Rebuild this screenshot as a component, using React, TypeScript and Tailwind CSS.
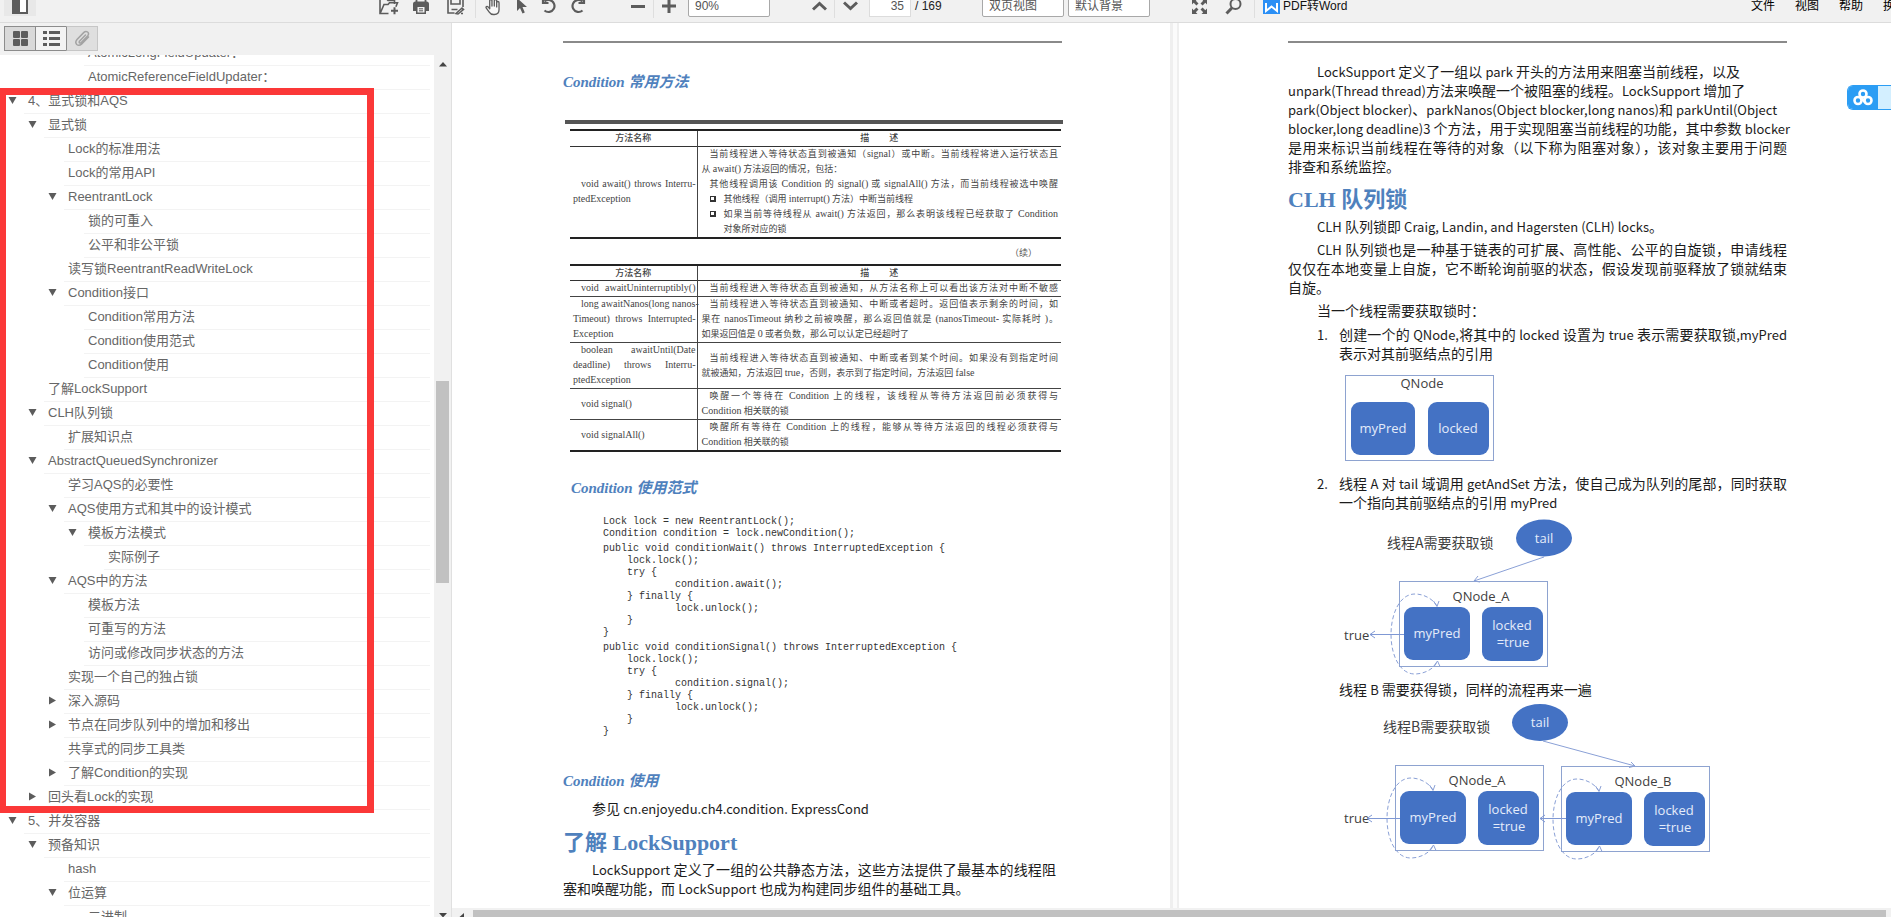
import React from "react";

type Level = 1 | 2 | 3 | 4 | 5;
type OutlineItem = { text: string; level: Level; state?: "open" | "closed" };

const outline: OutlineItem[] = [
  { text: "AtomicLongFieldUpdater：", level: 4 },
  { text: "AtomicReferenceFieldUpdater：", level: 4 },
  { text: "4、显式锁和AQS", level: 1, state: "open" },
  { text: "显式锁", level: 2, state: "open" },
  { text: "Lock的标准用法", level: 3 },
  { text: "Lock的常用API", level: 3 },
  { text: "ReentrantLock", level: 3, state: "open" },
  { text: "锁的可重入", level: 4 },
  { text: "公平和非公平锁", level: 4 },
  { text: "读写锁ReentrantReadWriteLock", level: 3 },
  { text: "Condition接口", level: 3, state: "open" },
  { text: "Condition常用方法", level: 4 },
  { text: "Condition使用范式", level: 4 },
  { text: "Condition使用", level: 4 },
  { text: "了解LockSupport", level: 2 },
  { text: "CLH队列锁", level: 2, state: "open" },
  { text: "扩展知识点", level: 3 },
  { text: "AbstractQueuedSynchronizer", level: 2, state: "open" },
  { text: "学习AQS的必要性", level: 3 },
  { text: "AQS使用方式和其中的设计模式", level: 3, state: "open" },
  { text: "模板方法模式", level: 4, state: "open" },
  { text: "实际例子", level: 5 },
  { text: "AQS中的方法", level: 3, state: "open" },
  { text: "模板方法", level: 4 },
  { text: "可重写的方法", level: 4 },
  { text: "访问或修改同步状态的方法", level: 4 },
  { text: "实现一个自己的独占锁", level: 3 },
  { text: "深入源码", level: 3, state: "closed" },
  { text: "节点在同步队列中的增加和移出", level: 3, state: "closed" },
  { text: "共享式的同步工具类", level: 3 },
  { text: "了解Condition的实现", level: 3, state: "closed" },
  { text: "回头看Lock的实现", level: 2, state: "closed" },
  { text: "5、并发容器", level: 1, state: "open" },
  { text: "预备知识", level: 2, state: "open" },
  { text: "hash", level: 3 },
  { text: "位运算", level: 3, state: "open" },
  { text: "二进制", level: 4 },
];

const indent: Record<Level, string> = {
  1: "ml-2",
  2: "ml-7",
  3: "ml-12",
  4: "ml-[68px]",
  5: "ml-[88px]",
};

const uiFont = "font-['Liberation_Sans','Noto_Sans_CJK_SC',sans-serif]";

function Arrow({ state }: { state?: "open" | "closed" }) {
  return (
    <span className="flex h-5 w-4 shrink-0 items-center">
      {state && (
        <svg width="9" height="9" viewBox="0 0 9 9" fill="#5c5c5c">
          {state === "open" ? <path d="M0.5 1h8L4.5 8z" /> : <path d="M1 0.5v8L8 4.5z" />}
        </svg>
      )}
    </span>
  );
}

function OutlineTree() {
  return (
    <ul className="-mt-[13px] mr-1">
      {outline.map((item) => (
        <li key={item.text} className={`${indent[item.level]} flex h-6`}>
          <Arrow state={item.state} />
          <a
            href="#"
            className="flex-1 border-b border-[#f3f3f3] pl-1 text-[13px] leading-[21px] whitespace-nowrap text-[#666]"
          >
            {item.text}
          </a>
        </li>
      ))}
    </ul>
  );
}

function ToolButton({ label, className = "", children }: { label: string; className?: string; children: React.ReactNode }) {
  return (
    <button type="button" aria-label={label} className={`flex h-5 shrink-0 items-center justify-center ${className}`}>
      {children}
    </button>
  );
}

function Separator({ className }: { className: string }) {
  return <span className={`h-6 w-px shrink-0 bg-[#dedede] ${className}`} />;
}

function Toolbar() {
  return (
    <header className="flex h-[23px] shrink-0 items-end overflow-hidden border-b border-[#dcdcdc] bg-[#f1f1f1] text-xs leading-3 text-[#555]">
      <div className="flex h-8 w-full shrink-0 items-center">
        <ToolButton label="侧边栏" className="ml-1 w-8 bg-[#e8e8e8]">
          <svg width="16" height="18" viewBox="0 0 16 18">
            <rect x="1" y="1" width="14" height="15" fill="#fff" stroke="#5c5c5c" strokeWidth="2" />
            <rect x="0" y="0" width="8" height="17" fill="#5c5c5c" />
          </svg>
        </ToolButton>
        <ToolButton label="打开" className="ml-[343px] w-5">
          <svg width="20" height="20" viewBox="0 0 20 20" fill="none" stroke="#5c5c5c" strokeWidth="1.6">
            <path d="M9.500 17.500H1V2h6l2 2.500h6.500V8M1.300 17L5 8.500h4l1.500-1.800h8l-1.600 4" />
            <path d="M12 14.800h7M15.500 11.300v7" strokeWidth="2" />
          </svg>
        </ToolButton>
        <ToolButton label="打印" className="ml-3.5 w-4">
          <svg width="16" height="20" viewBox="0 0 16 20">
            <path d="M3.500 7V0.500h9V7" fill="none" stroke="#5c5c5c" strokeWidth="1.800" />
            <path d="M0 8q0-2.500 2.500-2.500h11Q16 5.500 16 8v7h-3v3H3v-3H0z" fill="#5c5c5c" />
            <path d="M4.500 11h7v5.500h-7z" fill="#f1f1f1" />
            <path d="M6 12.800h4M6 14.800h4" stroke="#5c5c5c" />
          </svg>
        </ToolButton>
        <ToolButton label="保存" className="ml-[18px] w-[18px]">
          <svg width="18" height="20" viewBox="0 0 18 20" fill="none" stroke="#5c5c5c" strokeWidth="1.600">
            <path d="M7.500 17H1V1h12.500L16 3.500V11M4 1v7h9V1M4.500 13.500h6" />
            <path d="M9 17.500l6-5.500 1.500 1.500-5.500 4.500zM14 17.500h2" />
          </svg>
        </ToolButton>
        <Separator className="ml-2.5" />
        <ToolButton label="手型工具" className="ml-[9px] w-4">
          <svg width="17" height="20" viewBox="0 0 17 20" fill="#f8f8f8" stroke="#5c5c5c" strokeWidth="1.400" strokeLinejoin="round">
            <path d="M5 12V4.500a1.200 1.200 0 0 1 2.400 0V10 3.500a1.200 1.200 0 0 1 2.500 0V10 4.500a1.200 1.200 0 0 1 2.500 0V11 6.500a1.200 1.200 0 0 1 2.500 0V14q0 5-5 5H9q-3 0-4.500-2.500L1.200 12q-.5-1.500 1-1.500 1.200.2 2.800 2.500z" />
          </svg>
        </ToolButton>
        <ToolButton label="选择" className="ml-4 w-2.5">
          <svg width="10" height="20" viewBox="0 0 10 20" fill="#5c5c5c">
            <path d="M0 2v13l3-3 2.500 5.500 2.300-1L5.500 11H10z" />
          </svg>
        </ToolButton>
        <ToolButton label="向左旋转" className="ml-3.5 w-4">
          <svg width="16" height="20" viewBox="0 0 16 20" fill="none" stroke="#5c5c5c" strokeWidth="2.200">
            <path d="M3.500 5.500Q6 3.500 9 4.200a6 6 0 1 1-5.500 10.300" />
            <path d="M2 1.500v5.500h5.500" />
          </svg>
        </ToolButton>
        <ToolButton label="向右旋转" className="ml-[13px] w-4">
          <svg width="16" height="20" viewBox="0 0 16 20" fill="none" stroke="#5c5c5c" strokeWidth="2.200">
            <path d="M12.500 5.500Q10 3.500 7 4.200a6 6 0 1 0 5.500 10.300" />
            <path d="M14 1.500v5.500H8.500" />
          </svg>
        </ToolButton>
        <ToolButton label="缩小" className="ml-[45px] w-3.5">
          <span className="h-[3px] w-3.5 bg-[#5c5c5c]" />
        </ToolButton>
        <Separator className="ml-2" />
        <ToolButton label="放大" className="ml-2 w-3.5">
          <svg width="14" height="14" viewBox="0 0 14 14" stroke="#5c5c5c" strokeWidth="3">
            <path d="M0 7h14M7 0v14" />
          </svg>
        </ToolButton>
        <input
          aria-label="缩放比例"
          defaultValue="90%"
          className="ml-3 h-[22px] w-[82px] shrink-0 rounded-xs border border-[#a8a8a8] bg-white px-1.5"
        />
        <ToolButton label="上一页" className="ml-[42px] w-[15px]">
          <svg width="15" height="10" viewBox="0 0 15 10" fill="none" stroke="#5c5c5c" strokeWidth="3">
            <path d="M1 8.500l6.500-6 6.500 6" />
          </svg>
        </ToolButton>
        <Separator className="ml-[7px]" />
        <ToolButton label="下一页" className="ml-2 w-[15px]">
          <svg width="15" height="10" viewBox="0 0 15 10" fill="none" stroke="#5c5c5c" strokeWidth="3">
            <path d="M1 1.500l6.500 6 6.500-6" />
          </svg>
        </ToolButton>
        <input
          aria-label="页码"
          defaultValue="35"
          className="ml-[11px] h-[22px] w-[42px] shrink-0 border border-[#dcdcdc] bg-white px-1.5 text-right"
        />
        <span className="ml-1 w-[26px] shrink-0 whitespace-nowrap text-[#222]">/ 169</span>
        <select
          aria-label="视图模式"
          className="ml-[41px] h-[22px] w-[82px] shrink-0 appearance-none rounded-xs border border-[#a8a8a8] bg-white px-1.5"
        >
          <option>双页视图</option>
        </select>
        <select
          aria-label="背景"
          className="ml-1 h-[22px] w-[82px] shrink-0 appearance-none rounded-xs border border-[#a8a8a8] bg-white px-1.5"
        >
          <option>默认背景</option>
        </select>
        <ToolButton label="全屏" className="ml-[42px] w-[15px]">
          <svg width="15" height="15" viewBox="0 0 15 15" fill="#5c5c5c">
            <path d="M0 0h5.500L3.800 1.700 6.500 4.400 4.400 6.500 1.700 3.800 0 5.500zM15 0v5.500l-1.700-1.700-2.700 2.700-2.100-2.100 2.700-2.700L9.500 0zM0 15V9.500l1.700 1.700 2.700-2.700 2.100 2.100-2.700 2.700L5.500 15zM15 15H9.500l1.700-1.700-2.700-2.700 2.100-2.100 2.700 2.700L15 9.500z" />
          </svg>
        </ToolButton>
        <ToolButton label="查找" className="ml-[18px] w-[17px]">
          <svg width="17" height="18" viewBox="0 0 17 18" fill="none" stroke="#5c5c5c">
            <circle cx="10.500" cy="7" r="5" strokeWidth="2" />
            <path d="M6.800 11L1.500 16.500" strokeWidth="3" />
          </svg>
        </ToolButton>
        <Separator className="ml-3" />
        <button type="button" className="ml-2 flex shrink-0 items-center gap-[3px] whitespace-nowrap text-[#111]">
          <svg width="17" height="15" viewBox="0 1 17 15">
            <rect width="17" height="17" fill="#2b8ff5" />
            <path d="M3 5v8l5.500-4.500L14 13V5" fill="none" stroke="#fff" strokeWidth="2" />
          </svg>
          PDF转Word
        </button>
        <nav className="ml-auto flex w-[140px] shrink-0 gap-5 overflow-hidden text-black">
          {["文件", "视图", "帮助", "换"].map((name) => (
            <button key={name} type="button" className="shrink-0">
              {name}
            </button>
          ))}
        </nav>
      </div>
    </header>
  );
}

function Sidebar() {
  return (
    <aside className="relative flex w-[452px] shrink-0 flex-col border-r border-[#e0e0e0] bg-[#f1f1f1]">
      <div className="flex h-8 shrink-0 px-1 pt-[3px]">
        <button type="button" aria-label="缩略图" className="flex h-[25px] w-8 items-center justify-center border border-[#8c8c8c] bg-[#d9d9d9]">
          <svg width="15" height="15" viewBox="0 0 15 15" fill="#5c5c5c">
            <rect width="7" height="7" rx="1" />
            <rect x="8" width="7" height="7" rx="1" />
            <rect y="8" width="7" height="7" rx="1" />
            <rect x="8" y="8" width="7" height="7" rx="1" />
          </svg>
        </button>
        <button type="button" aria-label="目录" className="-ml-px flex h-[25px] w-8 items-center justify-center border border-[#8c8c8c] bg-[#f3f3f3]">
          <svg width="17" height="15" viewBox="0 0 17 15" fill="#5c5c5c">
            <path d="M0 0h4v3H0zM6 0h11v3H6zM0 6h4v3H0zM6 6h11v3H6zM0 12h4v3H0zM6 12h11v3H6z" />
          </svg>
        </button>
        <button type="button" aria-label="附件" className="-ml-px flex h-[25px] w-8 items-center justify-center border border-l-[#8c8c8c] border-[#c6c6c6] bg-[#dfdfdf]">
          <svg width="17" height="17" viewBox="0 0 17 17" fill="none" stroke="#a3a3a3" strokeWidth="1.500" strokeLinecap="round">
            <path d="M11.500 5L5.500 11.200q-.8 1.300.3 1.800.8.300 1.500-.5l6.500-6.800q1.500-2.200-.2-3.700-1.900-1.300-3.700.4L3 9.500q-2.300 2.800-.3 5 2.400 1.800 4.800-.4L14.500 7" />
          </svg>
        </button>
      </div>
      <div className="flex min-h-0 flex-1">
        <div className="min-w-0 flex-1 overflow-hidden bg-white">
          <OutlineTree />
        </div>
        <div className="flex w-[17px] shrink-0 flex-col items-center overflow-hidden">
          <svg className="mt-[7px] shrink-0" width="8" height="5" viewBox="0 0 8 5" fill="#444">
            <path d="M0 4.500L4 0l4 4.500z" />
          </svg>
          <span className="grow-[314]" />
          <span className="w-[13px] grow-[203] bg-[#c1c1c1]" />
          <span className="grow-[330]" />
          <svg className="shrink-0" width="8" height="4" viewBox="0 0 8 4" fill="#444">
            <path d="M0 0h8L4 4.500z" />
          </svg>
        </div>
      </div>
      <div className="pointer-events-none absolute top-[65px] -left-px h-[725px] w-[375px] border-7 border-[#fb3838]" />
    </aside>
  );
}

/* Sets Latin runs in their own size so that they sit evenly beside the CJK glyphs. */
function Mixed({ text, latin }: { text: string; latin: string }) {
  const parts = text.split(/([\x21-\x7e]+(?: +[\x21-\x7e]+)*)/);
  return (
    <>
      {parts.map((part, i) =>
        i % 2 ? (
          <span key={i} className={latin}>
            {part}
          </span>
        ) : (
          part
        ),
      )}
    </>
  );
}

type LineData = { text: string; full?: boolean; first?: boolean };

function BodyText({ lines, className = "" }: { lines: LineData[]; className?: string }) {
  return (
    <p className={`font-['Noto_Sans_CJK_SC',sans-serif] text-sm leading-[19px] text-[#1c1c1c] ${className}`}>
      {lines.map((line) => (
        <span
          key={line.text}
          className={`block whitespace-nowrap ${line.full ? "[text-align-last:justify]" : ""} ${line.first ? "pl-[29px]" : ""}`}
        >
          <Mixed text={line.text} latin="text-[13px] leading-none" />
        </span>
      ))}
    </p>
  );
}

function H2({ children, className }: { children: React.ReactNode; className: string }) {
  return (
    <h2 className={`font-['Liberation_Serif','Noto_Sans_CJK_SC',serif] text-[22px] leading-7 font-bold text-[#4f81bd] ${className}`}>
      {children}
    </h2>
  );
}

function H3({ children, className }: { children: React.ReactNode; className: string }) {
  return (
    <h3 className={`font-['Liberation_Serif','Noto_Sans_CJK_SC',serif] text-[15px] leading-5 font-bold text-[#4f81bd] italic ${className}`}>
      {children}
    </h3>
  );
}

type CellLine = { text: string; pad?: boolean; full?: boolean; bullet?: boolean; hang?: boolean };
type MethodRow = { name: CellLine[]; desc: CellLine[]; height: string };

function CellLines({ lines }: { lines: CellLine[] }) {
  return (
    <>
      {lines.map((line) => (
        <div
          key={line.text}
          className={`flex whitespace-nowrap ${line.pad ? "pl-2" : ""} ${line.hang ? "pl-[22px]" : ""}`}
        >
          {line.bullet && <span className="mt-1 mr-2 size-1.5 shrink-0 border border-r-2 border-b-2 border-[#333]" />}
          <span className={`flex-1 ${line.full ? "[text-align-last:justify]" : ""}`}>
            <Mixed text={line.text} latin="text-[10px] leading-none" />
          </span>
        </div>
      ))}
    </>
  );
}

function MethodTable({ rows, className }: { rows: MethodRow[]; className: string }) {
  return (
    <table
      className={`w-full table-fixed border-collapse border-y-2 border-[#222] font-['Liberation_Serif','Noto_Sans_CJK_SC',serif] text-[9px] leading-[15px] text-[#444] ${className}`}
    >
      <thead>
        <tr className="h-4 border-b border-[#333] leading-[14px]">
          <th className="w-[127px] border-r border-[#444] p-0 font-medium">方法名称</th>
          <th className="p-0 font-medium">
            <span className="flex justify-center gap-5">
              <span>描</span>
              <span>述</span>
            </span>
          </th>
        </tr>
      </thead>
      <tbody>
        {rows.map((row) => (
          <tr key={row.name[0].text} className={`${row.height} border-b border-[#444]`}>
            <td className="border-r border-[#444] py-0 pr-px pl-[3px]">
              <CellLines lines={row.name} />
            </td>
            <td className="py-0 pr-[3px] pl-1">
              <CellLines lines={row.desc} />
            </td>
          </tr>
        ))}
      </tbody>
    </table>
  );
}

const firstTable: MethodRow[] = [
  {
    height: "h-[90px]",
    name: [
      { text: "void await() throws Interru-", pad: true, full: true },
      { text: "ptedException" },
    ],
    desc: [
      { text: "当前线程进入等待状态直到被通知（signal）或中断。当前线程将进入运行状态且", pad: true, full: true },
      { text: "从 await() 方法返回的情况，包括：" },
      { text: "其他线程调用该 Condition 的 signal() 或 signalAll() 方法，而当前线程被选中唤醒", pad: true, full: true },
      { text: "其他线程（调用 interrupt() 方法）中断当前线程", pad: true, bullet: true },
      { text: "如果当前等待线程从 await() 方法返回，那么表明该线程已经获取了 Condition", pad: true, bullet: true, full: true },
      { text: "对象所对应的锁", hang: true },
    ],
  },
];

const secondTable: MethodRow[] = [
  {
    height: "h-4",
    name: [{ text: "void awaitUninterruptibly()", pad: true, full: true }],
    desc: [{ text: "当前线程进入等待状态直到被通知，从方法名称上可以看出该方法对中断不敏感", pad: true, full: true }],
  },
  {
    height: "h-[45px]",
    name: [
      { text: "long awaitNanos(long nanos-", pad: true, full: true },
      { text: "Timeout) throws Interrupted-", full: true },
      { text: "Exception" },
    ],
    desc: [
      { text: "当前线程进入等待状态直到被通知、中断或者超时。返回值表示剩余的时间，如", pad: true, full: true },
      { text: "果在 nanosTimeout 纳秒之前被唤醒，那么返回值就是 (nanosTimeout- 实际耗时 )。", full: true },
      { text: "如果返回值是 0 或者负数，那么可以认定已经超时了" },
    ],
  },
  {
    height: "h-[45px]",
    name: [
      { text: "boolean awaitUntil(Date", pad: true, full: true },
      { text: "deadline) throws Interru-", full: true },
      { text: "ptedException" },
    ],
    desc: [
      { text: "当前线程进入等待状态直到被通知、中断或者到某个时间。如果没有到指定时间", pad: true, full: true },
      { text: "就被通知，方法返回 true，否则，表示到了指定时间，方法返回 false" },
    ],
  },
  {
    height: "h-[31px]",
    name: [{ text: "void signal()", pad: true }],
    desc: [
      { text: "唤醒一个等待在 Condition 上的线程，该线程从等待方法返回前必须获得与", pad: true, full: true },
      { text: "Condition 相关联的锁" },
    ],
  },
  {
    height: "h-[31px]",
    name: [{ text: "void signalAll()", pad: true }],
    desc: [
      { text: "唤醒所有等待在 Condition 上的线程，能够从等待方法返回的线程必须获得与", pad: true, full: true },
      { text: "Condition 相关联的锁" },
    ],
  },
];

const codeBlocks = [
  `Lock lock = new ReentrantLock();
Condition condition = lock.newCondition();`,
  `public void conditionWait() throws InterruptedException {
    lock.lock();
    try {
            condition.await();
    } finally {
            lock.unlock();
    }
}`,
  `public void conditionSignal() throws InterruptedException {
    lock.lock();
    try {
            condition.signal();
    } finally {
            lock.unlock();
    }
}`,
];

function LeftPage() {
  return (
    <article className="overflow-hidden bg-white pt-[18px] pr-[108px] pl-[111px]">
      <hr className="border-t-2 border-[#8a8a8a]" />
      <H3 className="mt-[29px]">Condition 常用方法</H3>
      <div className="mt-7 -mr-px ml-0.5 h-1 bg-[#555]" />
      <div className="mr-px ml-[7px]">
        <MethodTable rows={firstTable} className="mt-[5px]" />
        <p className="mt-1.5 pr-6 text-right font-['Noto_Sans_CJK_SC',sans-serif] text-[9px] leading-[15px] text-[#555]">（续）</p>
        <MethodTable rows={secondTable} className="mt-1" />
      </div>
      <H3 className="mt-[26px] ml-2">Condition 使用范式</H3>
      <div className="mt-[18px] ml-10 flex flex-col gap-[3px] font-['Liberation_Mono',monospace] text-[10px] leading-3 text-[#333]">
        {codeBlocks.map((code) => (
          <pre key={code} className="font-[inherit]">
            {code}
          </pre>
        ))}
      </div>
      <H3 className="mt-[33px]">Condition 使用</H3>
      <BodyText className="mt-2" lines={[{ text: "参见 cn.enjoyedu.ch4.condition. ExpressCond", first: true }]} />
      <H2 className="mt-[11px]">了解 LockSupport</H2>
      <BodyText
        className="mt-[3px] mr-[6px]"
        lines={[
          { text: "LockSupport 定义了一组的公共静态方法，这些方法提供了最基本的线程阻", first: true, full: true },
          { text: "塞和唤醒功能，而 LockSupport 也成为构建同步组件的基础工具。" },
        ]}
      />
    </article>
  );
}

const nodeText = "font-['Open_Sans','Noto_Sans_CJK_SC',sans-serif] text-[13px]";
const titleText = "font-['Noto_Sans_CJK_SC',sans-serif] text-sm";

function QueueNode({ x, y, label }: { x: number; y: number; label: string }) {
  return (
    <g transform={`translate(${x} ${y})`}>
      <rect x="0.5" y="0.5" width="148" height="85" fill="#fff" stroke="#8ea3d0" />
      <text x="82" y="20" textAnchor="middle" fill="#404040">
        {label}
      </text>
      <rect x="5" y="26" width="66" height="53" rx="9" fill="#4472c4" />
      <rect x="83" y="26" width="61" height="54" rx="9" fill="#4472c4" />
      <text x="38" y="57" textAnchor="middle" fill="#e4ecfa">
        myPred
      </text>
      <text x="113" y="49" textAnchor="middle" fill="#e4ecfa">
        locked
      </text>
      <text x="114" y="66" textAnchor="middle" fill="#e4ecfa">
        =true
      </text>
      <g fill="none" stroke="#8aa0d6">
        <path d="M38 25C34 18 25 13 16 13C0 13-8 34-8 53.500S0 93 16 93C25 93 35 88 38 81" strokeDasharray="4 2.500" />
        <path d="M34.500 20L38 25.500 40 20M34.500 85.500L38.500 80 41 85.500" />
      </g>
    </g>
  );
}

function LeftArrow({ from, to, y }: { from: number; to: number; y: number }) {
  return <path d={`M${from} ${y}H${to}M${to + 5} ${y - 3.5}L${to} ${y}l5 3.500`} fill="none" stroke="#7f98d4" />;
}

function RightPage() {
  return (
    <article className="overflow-hidden bg-white pt-[18px] pr-[104px] pl-[109px]">
      <hr className="border-t-2 border-[#8a8a8a]" />
      <BodyText
        className="mt-[19px]"
        lines={[
          { text: "LockSupport 定义了一组以 park 开头的方法用来阻塞当前线程，以及", first: true },
          { text: "unpark(Thread thread)方法来唤醒一个被阻塞的线程。LockSupport 增加了" },
          { text: "park(Object blocker)、parkNanos(Object blocker,long nanos)和 parkUntil(Object" },
          { text: "blocker,long deadline)3 个方法，用于实现阻塞当前线程的功能，其中参数 blocker", full: true },
          { text: "是用来标识当前线程在等待的对象（以下称为阻塞对象），该对象主要用于问题", full: true },
          { text: "排查和系统监控。" },
        ]}
      />
      <H2 className="mt-2.5">CLH 队列锁</H2>
      <BodyText className="mt-[3px]" lines={[{ text: "CLH 队列锁即 Craig, Landin, and Hagersten (CLH) locks。", first: true }]} />
      <BodyText
        className="mt-1"
        lines={[
          { text: "CLH 队列锁也是一种基于链表的可扩展、高性能、公平的自旋锁，申请线程", first: true, full: true },
          { text: "仅仅在本地变量上自旋，它不断轮询前驱的状态，假设发现前驱释放了锁就结束", full: true },
          { text: "自旋。" },
        ]}
      />
      <BodyText className="mt-1" lines={[{ text: "当一个线程需要获取锁时：", first: true }]} />
      <ol className="pl-[29px]">
        <li className="mt-[5px] grid grid-cols-[22px_1fr]">
          <BodyText lines={[{ text: "1." }]} />
          <div className="min-w-0">
            <BodyText
              lines={[
                { text: "创建一个的 QNode,将其中的 locked 设置为 true 表示需要获取锁,myPred", full: true },
                { text: "表示对其前驱结点的引用" },
              ]}
            />
            <svg className={`mt-[11px] ${nodeText}`} width="160" height="88" viewBox="0 0 160 88">
              <rect x="6.500" y="1.500" width="148" height="85" fill="#fff" stroke="#8ea3d0" />
              <text x="83" y="14" textAnchor="middle" fill="#404040">
                QNode
              </text>
              <rect x="12" y="28" width="64" height="53" rx="9" fill="#4472c4" />
              <rect x="89" y="28" width="61" height="53" rx="9" fill="#4472c4" />
              <text x="44" y="59" textAnchor="middle" fill="#e4ecfa">
                myPred
              </text>
              <text x="119" y="59" textAnchor="middle" fill="#e4ecfa">
                locked
              </text>
            </svg>
          </div>
        </li>
        <li className="mt-3 grid grid-cols-[22px_1fr]">
          <BodyText lines={[{ text: "2." }]} />
          <div className="min-w-0">
            <BodyText
              lines={[
                { text: "线程 A 对 tail 域调用 getAndSet 方法，使自己成为队列的尾部，同时获取", full: true },
                { text: "一个指向其前驱结点的引用 myPred" },
              ]}
            />
            <svg className={`mt-1 ${nodeText}`} width="380" height="162" viewBox="0 0 380 162">
              <text x="48" y="32" fill="#404040" className={titleText}>
                线程A需要获取锁
              </text>
              <ellipse cx="205" cy="22" rx="28" ry="18.500" fill="#4472c4" />
              <text x="205" y="27" textAnchor="middle" fill="#e4ecfa">
                tail
              </text>
              <QueueNode x={60} y={65} label="QNode_A" />
              <path d="M205 41L135 65M139 60l-4 5 6 1" fill="none" stroke="#8aa0d6" />
              <text x="5" y="124" fill="#404040">
                true
              </text>
              <LeftArrow from={65} to={31} y={118.5} />
            </svg>
            <BodyText className="mt-0.5" lines={[{ text: "线程 B 需要获得锁，同样的流程再来一遍" }]} />
            <svg className={`mt-[3px] ${nodeText}`} width="380" height="160" viewBox="0 0 380 160">
              <text x="44" y="30" fill="#404040" className={titleText}>
                线程B需要获取锁
              </text>
              <ellipse cx="201" cy="20.500" rx="28" ry="18.500" fill="#4472c4" />
              <text x="201" y="25" textAnchor="middle" fill="#e4ecfa">
                tail
              </text>
              <QueueNode x={56} y={63} label="QNode_A" />
              <QueueNode x={222} y={64} label="QNode_B" />
              <path d="M204 39L296 64M292 60l4 4-6 1.500" fill="none" stroke="#8aa0d6" />
              <text x="5" y="121" fill="#404040">
                true
              </text>
              <LeftArrow from={61} to={28} y={116.5} />
              <LeftArrow from={227} to={201} y={116.5} />
            </svg>
          </div>
        </li>
      </ol>
    </article>
  );
}

function CloudBadge() {
  return (
    <button
      type="button"
      aria-label="网盘"
      className="absolute top-[62px] right-0 flex h-[25px] w-11 overflow-hidden rounded-l-md border border-r-0 border-[#2b9df4] bg-[#d3efff]"
    >
      <span className="flex h-full w-[30px] items-center justify-center bg-[#2b9df4]">
        <svg width="20" height="17" viewBox="0 0 20 17" fill="none" stroke="#fff" strokeWidth="2.600">
          <circle cx="10" cy="5" r="3.500" />
          <circle cx="5" cy="11.500" r="3.500" />
          <circle cx="15" cy="11.500" r="3.500" />
          <path d="M8 9l4.500 4.500" />
        </svg>
      </span>
    </button>
  );
}

function Viewer() {
  return (
    <main className="relative flex min-w-0 flex-1 flex-col bg-[#f1f1f1]">
      <div className="grid min-h-0 flex-1 grid-cols-[718fr_9px_712fr]">
        <LeftPage />
        <div className="border-r-2 border-l-3 border-[#efefef] bg-[#fbfbfb]" />
        <RightPage />
      </div>
      <div className="mt-0.5 flex h-[7px] shrink-0 overflow-hidden pr-[5px]">
        <svg className="mx-[7px] shrink-0" width="7" height="7" viewBox="0 0 7 7" fill="#444">
          <path d="M5 3v8L0.500 7z" />
        </svg>
        <span className="flex-1 bg-[#c1c1c1]" />
      </div>
      <CloudBadge />
    </main>
  );
}

export default function App() {
  return (
    <div lang="zh-CN" className={`flex h-screen flex-col overflow-hidden bg-white ${uiFont}`}>
      <Toolbar />
      <div className="flex min-h-0 flex-1">
        <Sidebar />
        <Viewer />
      </div>
    </div>
  );
}
